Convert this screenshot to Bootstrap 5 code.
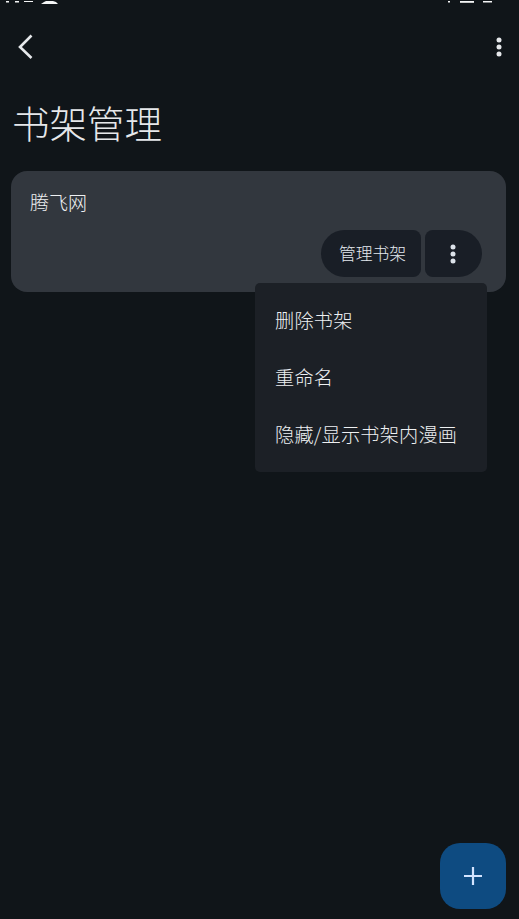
<!DOCTYPE html>
<html lang="zh">
<head>
<meta charset="utf-8">
<link href="https://cdn.jsdelivr.net/npm/bootstrap@5.3.0/dist/css/bootstrap.min.css" rel="stylesheet">
<style>
html,body{height:919px;overflow:hidden}
body{background:#101519;color:#eef0f2;font-family:"Noto Sans CJK SC","Noto Sans",sans-serif;font-weight:300}
.screen{height:919px;position:relative}
.sb{height:27px;line-height:0}
.topbar{height:40px;padding:0 17px 0 14px}
.top-btn{padding:0;border:0;background:none;line-height:0}
.page-title{font-size:37.5px;font-weight:300;line-height:56px;margin:0;padding:0 0 0 12px;margin-top:27px;color:#e6e8eb}
.shelf{margin-top:21px;margin-left:11px;margin-right:13px;height:121px;background:#32373e;border-radius:16px;padding:17px 19px}
.shelf-name{font-size:19px;line-height:28px}
.shelf-acts{margin-top:14px;padding-right:5px;gap:4px}
.act{background:#191e26;color:#e4e9ef;height:47px;border:0;display:flex;align-items:center;justify-content:center;font-size:16.8px;font-weight:300;padding:0}
.act-l{width:100px;border-radius:24px 8px 8px 24px;padding-left:3px}
.act-r{width:57px;border-radius:8px 24px 24px 8px;padding-right:2px}
.pop{position:absolute;left:255px;top:283px;width:232px;height:189px;background:#1c2026;border-radius:5px;padding:9px 0;margin:0;list-style:none}
.pop li{height:57px;line-height:56px;padding-left:20px;font-size:19.200px;letter-spacing:.2px;white-space:nowrap;color:#eef0f2}
.fab{position:absolute;left:440px;top:843px;width:66px;height:66px;border:0;border-radius:20px;background:#0e4b81;padding:0;line-height:0}
</style>
</head>
<body>
<div class="screen">
<div class="sb"><svg width="519" height="4" viewBox="0 0 519 4"><g fill="#f4f5f6"><rect x="6" y="0" width="3" height="1.500"/><rect x="15" y="0" width="4" height="1.500"/><rect x="24" y="0" width="9" height="1"/><path d="M41 3 44 1 46 0H53L56 1 58 3H41Z"/><rect x="448" y="0" width="2" height="1.500"/><rect x="460" y="0" width="14" height="1.800"/><rect x="483" y="0" width="9" height="1.500"/></g></svg></div>
<div class="topbar d-flex justify-content-between align-items-center">
<button class="top-btn" aria-label="返回"><svg width="26" height="26" viewBox="0 0 26 26"><path d="M18.5 2.5 7 14l11.500 11" transform="translate(-1 -1)" fill="none" stroke="#e6e8eb" stroke-width="2.600"/></svg></button>
<button class="top-btn" aria-label="更多"><svg width="6" height="20" viewBox="0 0 6 20"><circle cx="3" cy="3" r="2.500" fill="#e6e8eb"/><circle cx="3" cy="10" r="2.500" fill="#e6e8eb"/><circle cx="3" cy="17" r="2.500" fill="#e6e8eb"/></svg></button>
</div>
<h1 class="page-title">书架管理</h1>
<div class="shelf">
<div class="shelf-name">腾飞网</div>
<div class="shelf-acts d-flex justify-content-end">
<button class="act act-l">管理书架</button>
<button class="act act-r" aria-label="更多"><svg width="6" height="20" viewBox="0 0 6 20"><circle cx="3" cy="3" r="2.500" fill="#dde3ea"/><circle cx="3" cy="10" r="2.500" fill="#dde3ea"/><circle cx="3" cy="17" r="2.500" fill="#dde3ea"/></svg></button>
</div>
</div>
<ul class="pop">
<li>删除书架</li>
<li>重命名</li>
<li>隐藏/显示书架内漫画</li>
</ul>
<button class="fab" aria-label="新建"><svg width="18" height="18" viewBox="0 0 18 18"><path d="M9 0v18M0 9h18" stroke="#d3e4ff" stroke-width="2.200"/></svg></button>
</div>
<script src="https://cdn.jsdelivr.net/npm/bootstrap@5.3.0/dist/js/bootstrap.bundle.min.js"></script>
</body>
</html>
